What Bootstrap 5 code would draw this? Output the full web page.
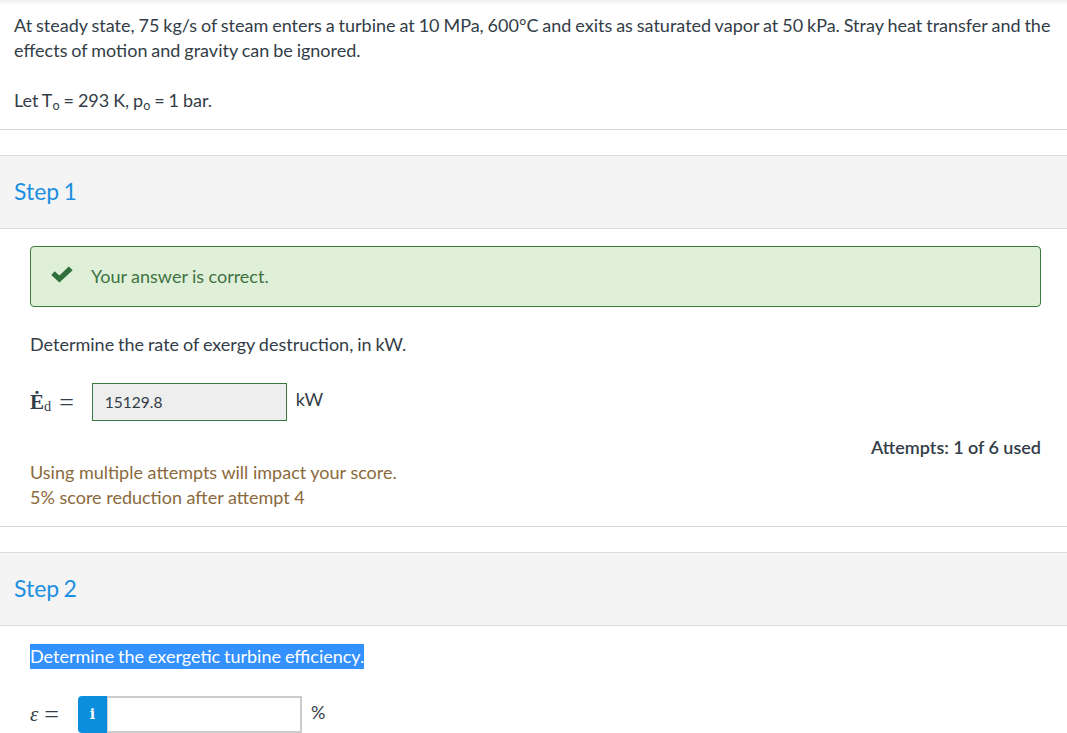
<!DOCTYPE html>
<html lang="en">
  <head>
    <meta charset="UTF-8" />
    <meta name="viewport" content="width=device-width, initial-scale=1.0" />
    <title>Turbine exergy question</title>
    <link href="https://cdn.jsdelivr.net/npm/bootstrap@5.3.3/dist/css/bootstrap.min.css" rel="stylesheet" />
    <style>
      html, body { height: 733px; overflow: hidden; }
      body {
        background: #fff;
        color: #333d47;
        font-family: "Lato", "Liberation Sans", sans-serif;
        font-size: 18px;
        line-height: 25px;
        word-spacing: -0.7px;
      }
      .top-fade { height: 5px; background: linear-gradient(#efefef, #fff); }
      .stem-block { padding: 8px 10px 16px 14px; border-bottom: 1px solid #d8d8d8; }
      .stem-block sub { font-size: 70%; bottom: -0.2em; }
      .step-head {
        margin-top: 25px;
        height: 74px;
        padding: 0 14px 2px;
        background: #f4f4f4;
        border-top: 1px solid #dcdcdc;
        border-bottom: 1px solid #dcdcdc;
        color: #1b8fe2;
        font-size: 23px;
        word-spacing: -1.5px;
      }
      .step-body { padding: 17px 26px 0 30px; }
      .correct-box {
        height: 61px;
        padding-left: 20px;
        background: #dfefd8;
        border: 1px solid #3b7a3d;
        border-radius: 4px;
        color: #3f7343;
        word-spacing: -0.2px;
      }
      .correct-box svg { margin-right: 18px; margin-top: -4px; }
      .prompt-line { margin-top: 25px; }
      .math-label {
        display: flex;
        align-items: center;
        font-family: "Liberation Serif", "DejaVu Serif", serif;
        font-size: 21px;
        margin-right: 18px;
      }
      .math-label sub { font-size: 68%; bottom: -0.25em; font-weight: 400; }
      .math-eq { font-size: 26px; line-height: 25px; margin-left: 8px; }
      .math-label.short-label { margin-right: 19px; }
      .math-label.short-label .math-eq { margin-left: 6px; }
      .answer-row { height: 38px; margin-top: 26px; }
      .answer-done {
        width: 195px;
        height: 38px;
        padding: 0 12px;
        background: #eee;
        border: 1px solid #3b7a3d;
        font-size: 15.5px;
      }
      .unit-text { margin-left: 9px; margin-top: -5px; }
      .attempt-count { font-weight: 600; margin-top: 14px; text-align: right; word-spacing: -0.1px; }
      .score-note { color: #8a6a3c; word-spacing: 0; }
      .step-end { border-bottom: 1px solid #d8d8d8; padding-bottom: 16px; }
      .picked-row { padding-top: 1px; }
      .picked-text { display: inline-block; background: #3390ff; color: #fff; }
      .entry-row { margin-top: 27px; }
      .info-tag {
        width: 29px;
        height: 37px;
        background: #0b8ede;
        color: #fff;
        border-radius: 4px 0 0 4px;
        font-family: "DejaVu Serif", serif;
        font-weight: 700;
        font-size: 14px;
      }
      .answer-empty {
        width: 195px;
        height: 37px;
        border: 2px solid #ccc;
        border-left-width: 1px;
      }
    </style>
  </head>
  <body>
    <div class="top-fade"></div>

    <div class="stem-block">
      At steady state, 75 kg/s of steam enters a turbine at 10 MPa, 600°C and exits as saturated vapor at 50 kPa. Stray heat transfer and the effects of motion and gravity can be ignored.<br /><br />
      Let T<sub>o</sub> = 293 K, p<sub>o</sub> = 1 bar.
    </div>

    <div class="step-head d-flex align-items-center">Step 1</div>
    <div class="step-body step-end">
      <div class="correct-box d-flex align-items-center">
        <svg width="22" height="17" viewBox="0 0 21 16" aria-hidden="true">
          <path d="M0.3 8.5 3.5 5 8 9 17 0.3 20.7 4 8 15.7Z" fill="#2f6f3a" />
        </svg>
        <span>Your answer is correct.</span>
      </div>
      <div class="prompt-line">Determine the rate of exergy destruction, in kW.</div>
      <div class="answer-row d-flex align-items-center">
        <span class="math-label"><b>Ė</b><sub>d</sub><span class="math-eq">=</span></span>
        <div class="answer-done d-flex align-items-center">15129.8</div>
        <span class="unit-text">kW</span>
      </div>
      <div class="attempt-count">Attempts: 1 of 6 used</div>
      <div class="score-note">Using multiple attempts will impact your score.<br />5% score reduction after attempt 4</div>
    </div>

    <div class="step-head d-flex align-items-center">Step 2</div>
    <div class="step-body">
      <div class="picked-row"><span class="picked-text">Determine the exergetic turbine efficiency.</span></div>
      <div class="entry-row d-flex align-items-center">
        <span class="math-label short-label"><i>ε</i><span class="math-eq">=</span></span>
        <div class="info-tag d-flex align-items-center justify-content-center">i</div>
        <div class="answer-empty"></div>
        <span class="unit-text">%</span>
      </div>
    </div>
    <script src="https://cdn.jsdelivr.net/npm/bootstrap@5.3.3/dist/js/bootstrap.bundle.min.js"></script>
  </body>
</html>
